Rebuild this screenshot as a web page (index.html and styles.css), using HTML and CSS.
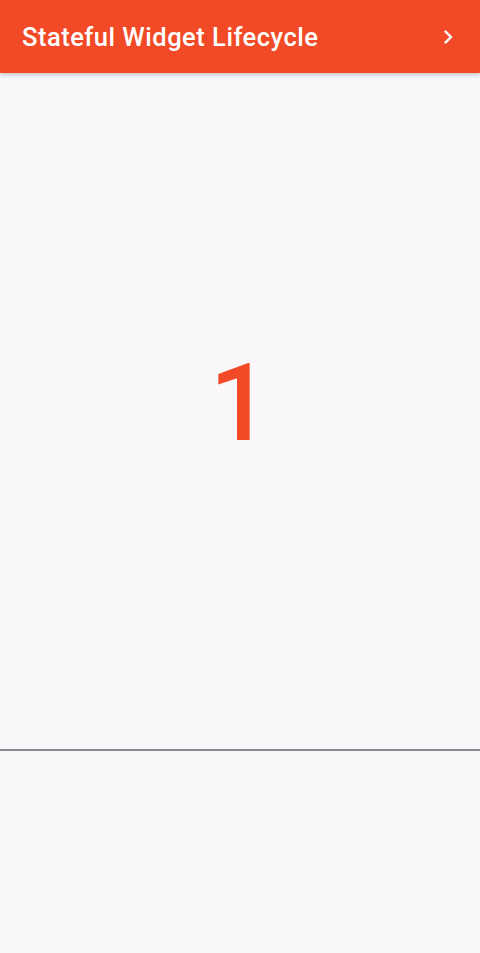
FILE: index.html
```html
<!DOCTYPE html>
<html>
<head>
<meta charset="utf-8">
<link rel="stylesheet" href="styles.css">
</head>
<body>
<div class="app">
  <header class="appbar">
    <h1 class="title">Stateful Widget Lifecycle</h1>
    <svg class="chev" width="28" height="28" viewBox="0 0 24 24"><path d="M8.59 16.59 13.17 12 8.59 7.41 10 6l6 6-6 6z" fill="#fff"/></svg>
  </header>
  <main class="body">
    <div class="center"><span class="count">1</span></div>
    <div class="divider"></div>
    <div class="bottom"></div>
  </main>
</div>
</body>
</html>
```
FILE: styles.css
```css
html, body { margin: 0; padding: 0; }
body { font-family: Roboto, "Noto Sans", sans-serif; background: #f9f7fa; }
.app { display: flex; flex-direction: column; height: 953px; width: 480px; }
.appbar {
  height: 73px; flex: none; background: #f24a26;
  display: flex; align-items: center; justify-content: space-between;
  padding: 0 18px 0 22px; box-sizing: border-box;
  box-shadow: 0 2px 4px rgba(0,0,0,0.2);
  position: relative; z-index: 1;
}
.title { margin: 0; color: #fff; font-size: 25.5px; font-weight: 500; letter-spacing: 0.5px; }
.chev { display: block; }
.body { flex: 1; display: flex; flex-direction: column; }
.center { height: 660px; padding-bottom: 16px; display: flex; align-items: center; justify-content: center; }
.count { color: #f24a26; font-size: 107px; font-weight: 500; line-height: 1; }
.divider { height: 2px; background: #8c8a90; }
.bottom { flex: 1; }
```
